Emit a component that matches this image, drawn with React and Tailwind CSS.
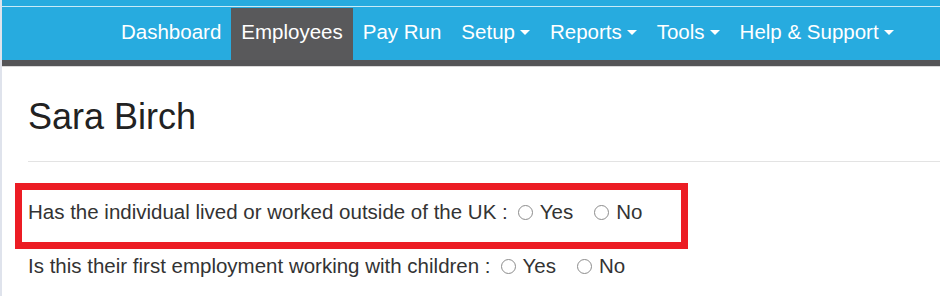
import React from "react";

const Caret = () => (
  <span className="inline-block w-0 h-0 ml-[5px] align-middle border-t-[5px] border-t-white border-x-[5px] border-x-transparent" />
);

const NavItem = ({ label, active, caret }) => (
  <div
    className={
      "h-[52px] flex items-center px-[10px] pb-[4px] text-[20.5px] text-white " +
      (active ? "bg-[#59595b]" : "")
    }
  >
    <span>{label}</span>
    {caret && <Caret />}
  </div>
);

const Radio = ({ label }) => (
  <span className="inline-flex items-center">
    <span className="w-[15px] h-[15px] rounded-full border border-[#8c8c8c] bg-white inline-block" />
    <span className="ml-[7px]">{label}</span>
  </span>
);

const Question = ({ text }) => (
  <div className="flex items-center text-[20.5px] text-[#333333]">
    <span>{text}</span>
    <span className="ml-[10px] flex items-center gap-[21px]">
      <Radio label="Yes" />
      <Radio label="No" />
    </span>
  </div>
);

export default function App() {
  return (
    <div
      className="w-[940px] h-[296px] overflow-hidden bg-white border-l-2 border-[#dfe3ec] relative"
      style={{ fontFamily: '"Liberation Sans", Arial, sans-serif' }}
    >
      <div className="h-[6px] bg-[#27abdf]" />
      <div className="h-px bg-[#c9ebf7]" />
      <div className="h-[53px] bg-[#27abdf] flex items-end pl-[109px]">
        <NavItem label="Dashboard" />
        <NavItem label="Employees" active />
        <NavItem label="Pay Run" />
        <NavItem label="Setup" caret />
        <NavItem label="Reports" caret />
        <NavItem label="Tools" caret />
        <NavItem label="Help & Support" caret />
      </div>
      <div className="h-[6px] bg-[#555557]" />
      <div className="h-px bg-[#d9d9d9]" />

      <div className="pl-[26px] pt-[30px]">
        <h1 className="text-[36px] leading-[40px] text-[#222222]">Sara Birch</h1>
        <div className="mt-[24px] h-px bg-[#e3e3e3]" />
      </div>

      <div className="mt-[21px] ml-[13px] w-[673px] h-[66px] border-[7px] border-[#ec1c24] flex items-center pl-[6px] pb-[8px]">
        <Question text="Has the individual lived or worked outside of the UK :" />
      </div>

      <div className="pl-[26px] mt-[2px]">
        <Question text="Is this their first employment working with children :" />
      </div>

      <div className="absolute left-[-2px] top-[139px] w-[2px] h-[4px] bg-black" />
    </div>
  );
}
